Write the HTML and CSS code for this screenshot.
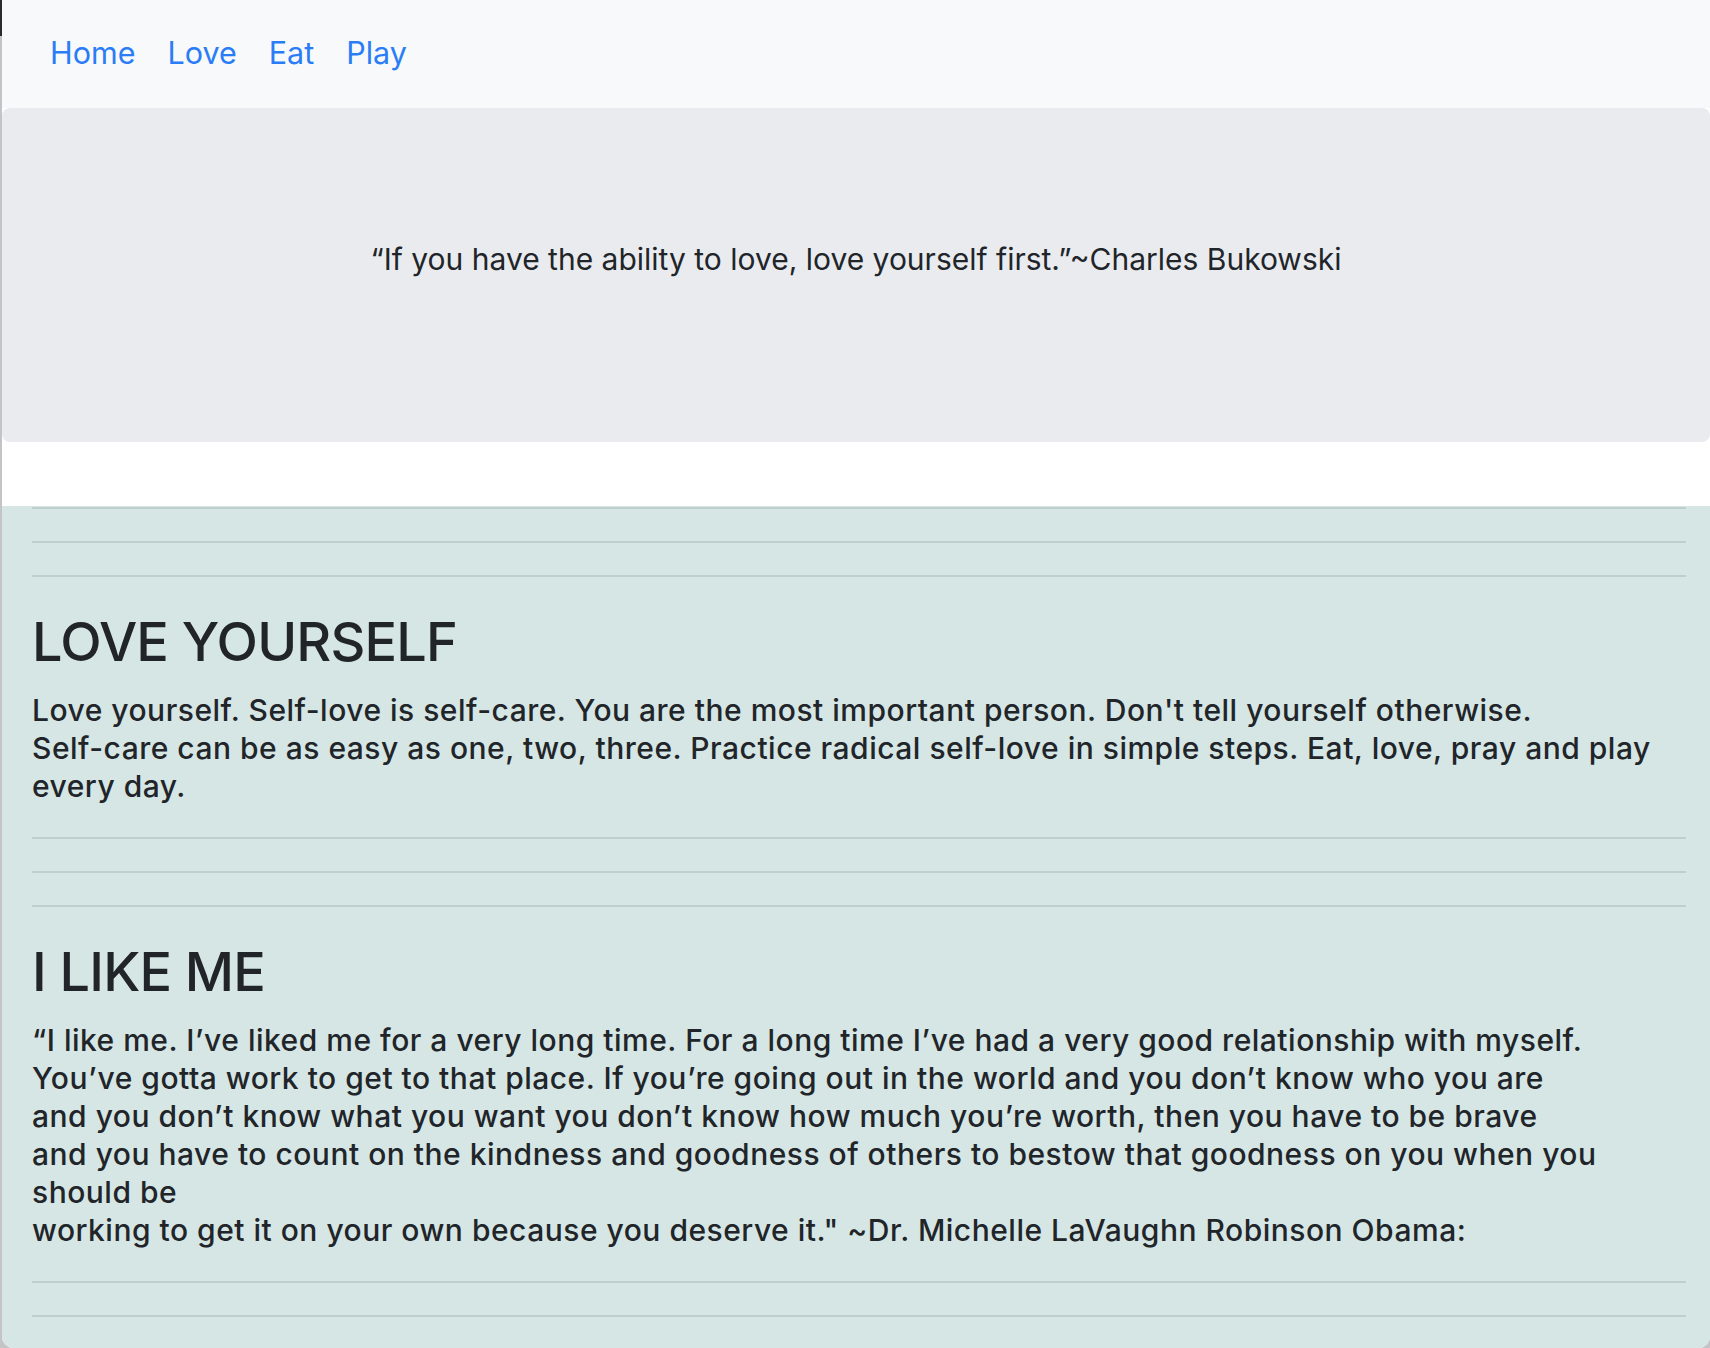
FILE: index.html
```html
<!DOCTYPE html>
<html lang="en">
<head>
<meta charset="utf-8">
<title>Love Yourself</title>
<link rel="stylesheet" href="styles.css">
</head>
<body>
<div class="window">
  <nav class="navbar">
    <a class="nav-link" href="#">Home</a>
    <a class="nav-link" href="#">Love</a>
    <a class="nav-link" href="#">Eat</a>
    <a class="nav-link" href="#">Play</a>
  </nav>
  <div class="jumbotron">
    <p class="quote">“If you have the ability to love, love yourself first.”~Charles Bukowski</p>
  </div>
  <main class="content">
    <hr>
    <hr>
    <hr>
    <h1>LOVE YOURSELF</h1>
    <p>Love yourself. Self-love is self-care. You are the most important person. Don't tell yourself otherwise.<br>Self-care can be as easy as one, two, three. Practice radical self-love in simple steps. Eat, love, pray and play every day.</p>
    <hr>
    <hr>
    <hr>
    <h1>I LIKE ME</h1>
    <p>“I like me. I’ve liked me for a very long time. For a long time I’ve had a very good relationship with myself.<br>You’ve gotta work to get to that place. If you’re going out in the world and you don’t know who you are<br>and you don’t know what you want you don’t know how much you’re worth, then you have to be brave<br>and you have to count on the kindness and goodness of others to bestow that goodness on you when you should be<br>working to get it on your own because you deserve it." ~Dr. Michelle LaVaughn Robinson Obama:</p>
    <hr>
    <hr>
  </main>
</div>
</body>
</html>
```
FILE: styles.css
```css
html, body {
  margin: 0;
  padding: 0;
  height: 100%;
}

body {
  background: linear-gradient(to bottom, #2b2b2b 0, #2b2b2b 36px, #c4c4c6 36px, #c4c4c6 100%);
  font-family: Inter, "Noto Sans", "Liberation Sans", sans-serif;
  color: #212529;
  overflow: hidden;
}

.window {
  margin-left: 2px;
  height: 1348px;
  background: #ffffff;
  border-radius: 0 0 12px 12px;
  overflow: hidden;
  display: flex;
  flex-direction: column;
}

.navbar {
  height: 108px;
  background: #f8f9fa;
  display: flex;
  align-items: center;
  padding: 0 32px;
  flex-shrink: 0;
}

.nav-link {
  color: #2a7df6;
  text-decoration: none;
  font-size: 30.5px;
  padding: 0 16px;
  line-height: 48px;
  margin-top: -2px;
}

.jumbotron {
  background: #e9ebef;
  border-radius: 8px;
  padding: 128px 64px;
  margin-bottom: 64px;
  flex-shrink: 0;
  text-align: center;
}

.quote {
  margin: 0 0 32px;
  font-size: 30px;
  line-height: 46px;
}

.content {
  flex: 1;
  background: #d6e6e5;
  padding: 1px 24px 0 30px;
}

hr {
  height: 0;
  border: 0;
  border-top: 2px solid #bfcfce;
  margin: 32px 0;
}

.content > hr:first-child {
  margin-top: 0;
}

h1 {
  font-size: 54px;
  font-weight: 500;
  line-height: 66px;
  margin: 0 0 16px;
  letter-spacing: -0.8px;
}

.content p {
  font-size: 30px;
  font-weight: 500;
  line-height: 38px;
  letter-spacing: 0.5px;
  margin: 0 0 32px;
}
```
